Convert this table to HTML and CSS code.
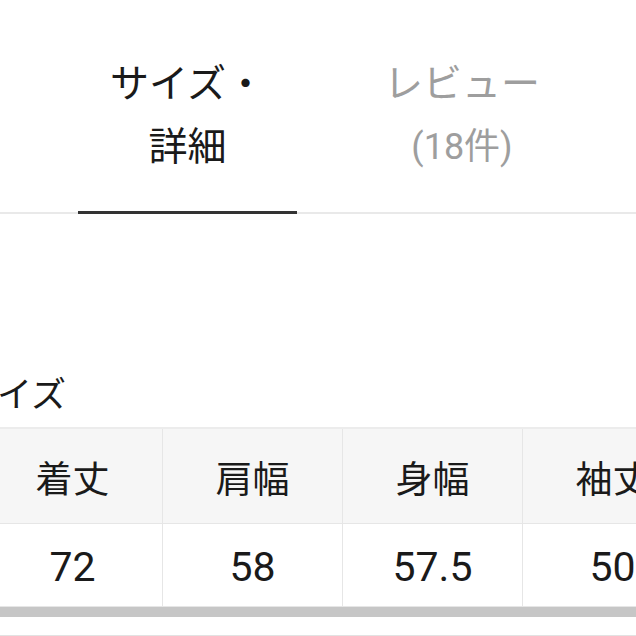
FILE: index.html
```html
<!DOCTYPE html>
<html lang="ja">
<head>
<meta charset="utf-8">
<link rel="stylesheet" href="styles.css">
</head>
<body>
<div class="page">
  <nav class="tabs">
    <div class="tab tab-active">
      <span class="tab-line">サイズ・</span>
      <span class="tab-line">詳細</span>
    </div>
    <div class="tab tab-inactive">
      <span class="tab-line">レビュー</span>
      <span class="tab-line tab-count">(18件)</span>
    </div>
  </nav>

  <section class="size-section">
    <h2 class="section-title">サイズ</h2>
    <div class="table-scroll">
      <div class="size-table">
        <div class="cell head">着丈</div>
        <div class="cell head">肩幅</div>
        <div class="cell head">身幅</div>
        <div class="cell head">袖丈</div>
        <div class="cell value">72</div>
        <div class="cell value">58</div>
        <div class="cell value">57.5</div>
        <div class="cell value">50</div>
      </div>
    </div>
    <div class="scroll-bar"></div>
  </section>
  <div class="bottom-line"></div>
</div>
</body>
</html>
```

FILE: styles.css
```css
* {
  box-sizing: border-box;
}

html, body {
  margin: 0;
  padding: 0;
  background: #ffffff;
  overflow: hidden;
}

body {
  font-family: Roboto, "Noto Sans CJK JP", sans-serif;
  color: #1c1c1c;
}

.page {
  width: 636px;
  height: 636px;
  overflow: hidden;
}

.tabs {
  display: flex;
  padding-left: 78px;
  border-bottom: 2px solid #e9e9e9;
  height: 214px;
}

.tab {
  display: flex;
  flex-direction: column;
  align-items: center;
  padding-top: 53px;
  font-size: 39px;
  line-height: 63px;
}

.tab-active {
  width: 219px;
  color: #1a1a1a;
  border-bottom: 3px solid #333333;
  margin-bottom: -2px;
}

.tab-inactive {
  width: 330px;
  color: #9e9e9e;
}

.tab-line {
  display: block;
  white-space: nowrap;
}

.tab-count {
  font-size: 36px;
}

.size-section {
  padding-top: 150px;
}

.section-title {
  margin: 0 0 0 -38px;
  font-size: 35px;
  font-weight: 400;
  line-height: 63px;
  color: #1a1a1a;
}

.table-scroll {
  overflow: hidden;
}

.size-table {
  display: grid;
  grid-template-columns: repeat(4, 180px);
  grid-template-rows: 95px 83px;
  width: 720px;
  margin-left: -17px;
  border-top: 2px solid #ececec;
}

.cell {
  display: flex;
  align-items: center;
  justify-content: center;
  border-right: 1px solid #e6e6e6;
  border-bottom: 1px solid #e6e6e6;
  color: #1a1a1a;
}

.head {
  background: #f6f6f6;
  font-size: 37px;
  padding-top: 2px;
}

.value {
  background: #ffffff;
  font-size: 41px;
  padding-top: 4px;
}

.scroll-bar {
  height: 10px;
  background: #c6c6c6;
}

.bottom-line {
  margin-top: 18px;
  height: 1px;
  background: #e2e2e2;
}
```
